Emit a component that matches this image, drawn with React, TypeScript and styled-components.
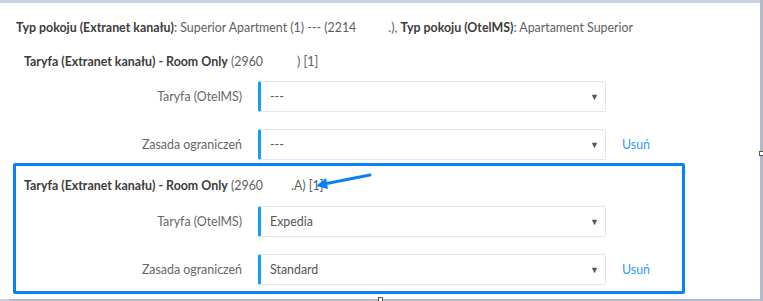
import React from "react";
import styled, { createGlobalStyle } from "styled-components";

const Global = createGlobalStyle`
  html, body { margin: 0; padding: 0; background: #fff; }
  body { font-family: "Lato", "Open Sans", sans-serif; }
`;

const Frame = styled.div`
  position: relative;
  width: 763px;
  height: 301px;
  box-sizing: border-box;
  background: #b1b9ca;
  padding: 3px 3px 2px 0;
`;

const TopBand = styled.div`
  position: absolute;
  left: 0;
  top: 0;
  width: 760px;
  height: 3px;
  background: #c8d0e2;
`;

const BottomLight = styled.div`
  position: absolute;
  left: 0;
  bottom: 0;
  width: 9px;
  height: 2px;
  background: #cbd3e3;
`;

const Panel = styled.div`
  height: 100%;
  background: #fff;
  box-sizing: border-box;
  padding: 16px 0 0 16px;
  font-size: 12.4px;
  color: #5e5e5e;
`;

const InfoLine = styled.div`
  line-height: 18px;
  height: 18px;
  white-space: nowrap;
`;

const Strong = styled.b`
  font-weight: 700;
  color: #3c3c3c;
`;

const Gap = styled.span<{ $w: number }>`
  display: inline-block;
  width: ${(p) => p.$w}px;
`;

const Group = styled.div<{ $highlight?: boolean }>`
  width: 672px;
  box-sizing: border-box;
  border: 3px solid ${(p) => (p.$highlight ? "#0a80f8" : "transparent")};
  border-radius: 2px;
  margin-left: -3px;
  padding: 0 0 ${(p) => (p.$highlight ? 6 : 0)}px 8px;
`;

const GroupTitle = styled.div<{ $top: number; $bottom: number }>`
  line-height: 18px;
  height: 18px;
  margin-top: ${(p) => p.$top}px;
  margin-bottom: ${(p) => p.$bottom}px;
  white-space: nowrap;
`;

const Row = styled.div`
  display: flex;
  align-items: center;
  height: 31px;
  & + & {
    margin-top: 17px;
  }
`;

const Label = styled.div`
  width: 234px;
  box-sizing: border-box;
  text-align: right;
  color: #666;
  padding-right: 16px;
`;

const Select = styled.div`
  width: 348px;
  height: 31px;
  box-sizing: border-box;
  border: 1px solid #e6e6e6;
  border-left: 3px solid #10a2f0;
  border-radius: 2px;
  display: flex;
  align-items: center;
  justify-content: space-between;
  padding: 0 6px 0 9px;
  color: #555;
`;

const Caret = styled.span`
  font-size: 9px;
  color: #555;
`;

const Link = styled.a`
  margin-left: 16px;
  color: #2f9bff;
  text-decoration: none;
`;

const ArrowSvg = styled.svg`
  position: absolute;
  left: 310px;
  top: 170px;
  overflow: visible;
`;

const Handle = styled.div<{ $x: number; $y: number }>`
  position: absolute;
  left: ${(p) => p.$x}px;
  top: ${(p) => p.$y}px;
  width: 3px;
  height: 3px;
  border: 1px solid #555;
  background: #fff;
`;

type Field = { label: string; value: string; remove?: boolean };

const Fields = ({ items }: { items: Field[] }) => (
  <>
    {items.map((f) => (
      <Row key={f.label}>
        <Label>{f.label}</Label>
        <Select>
          <span>{f.value}</span>
          <Caret>▼</Caret>
        </Select>
        {f.remove && <Link href="#">Usuń</Link>}
      </Row>
    ))}
  </>
);

export default function App() {
  return (
    <>
      <Global />
      <Frame>
        <TopBand />
        <BottomLight />
        <Panel>
          <InfoLine>
            <Strong>Typ pokoju (Extranet kanału)</Strong>: Superior Apartment (1) --- (2214
            <Gap $w={32} />
            .), <Strong>Typ pokoju (OtelMS)</Strong>: Apartament Superior
          </InfoLine>
          <Group>
            <GroupTitle $top={13} $bottom={10}>
              <Strong>Taryfa (Extranet kanału) - Room Only</Strong> (2960
              <Gap $w={34} />) [1]
            </GroupTitle>
            <Fields
              items={[
                { label: "Taryfa (OtelMS)", value: "---" },
                { label: "Zasada ograniczeń", value: "---", remove: true },
              ]}
            />
          </Group>
          <Group $highlight>
            <GroupTitle $top={11} $bottom={11}>
              <Strong>Taryfa (Extranet kanału) - Room Only</Strong> (2960
              <Gap $w={28} />
              .A) [1]
            </GroupTitle>
            <Fields
              items={[
                { label: "Taryfa (OtelMS)", value: "Expedia" },
                { label: "Zasada ograniczeń", value: "Standard", remove: true },
              ]}
            />
          </Group>
        </Panel>
        <ArrowSvg width="64" height="24" viewBox="0 0 64 24">
          <line x1="60" y1="5" x2="14" y2="14" stroke="#0a80f8" strokeWidth="3" strokeLinecap="round" />
          <polygon points="6,16 16,8 18,19" fill="#0a80f8" />
        </ArrowSvg>
        <Handle $x={759} $y={151} />
        <Handle $x={378} $y={297} />
      </Frame>
    </>
  );
}
